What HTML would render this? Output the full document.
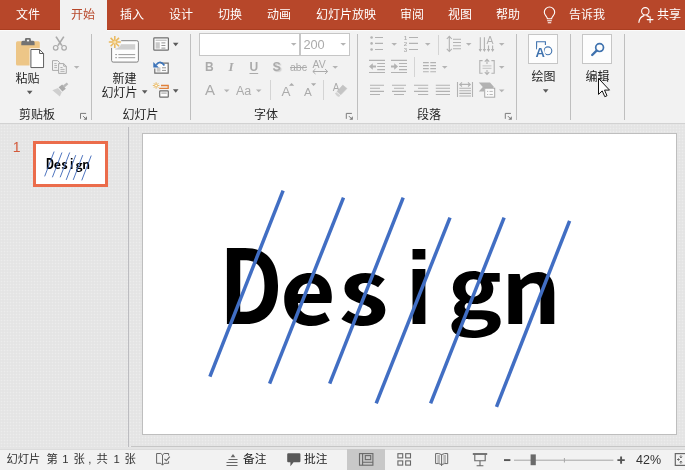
<!DOCTYPE html>
<html lang="zh-CN">
<head>
<meta charset="utf-8">
<title>PowerPoint</title>
<style>
*{margin:0;padding:0;box-sizing:border-box}
html,body{width:685px;height:470px;overflow:hidden;background:#e6e6e6}
body{position:relative;font-family:"Liberation Sans","Noto Sans CJK SC",sans-serif;font-size:12px;color:#262626}
.abs{position:absolute}
#tabs{position:absolute;left:0;top:0;width:685px;height:30px;background:#b7472a;border-bottom:1px solid #aa3e21}
#tabs .t{position:absolute;top:0;height:30px;line-height:30px;color:#fff;font-size:12px;white-space:nowrap}
#tabs .act{position:absolute;left:60px;top:0;width:47px;height:30px;background:#f2f2f2}
#ribbon{position:absolute;left:0;top:30px;width:685px;height:94px;background:#f2f2f2;border-bottom:1px solid #d2d2d2;border-top:1px solid #fbfbfb}
.sep{position:absolute;width:1px;background:#bfbfbf}
.lbl{position:absolute;font-size:12px;line-height:14px;white-space:nowrap;color:#262626}
.g{color:#ababab}
.dd{position:absolute;width:0;height:0;border-left:2.5px solid transparent;border-right:2.5px solid transparent;border-top:3px solid #b0b0b0}
.ddk{border-top-color:#555}
#work{position:absolute;left:0;top:124px;width:685px;height:324px;background-color:#e4e4e4;background-image:radial-gradient(circle at 1.5px 1.5px,#ececec 0.7px,rgba(236,236,236,0) 1.1px);background-size:3px 3px}
#status{position:absolute;left:0;top:449px;width:685px;height:21px;background:#f2f2f2;border-top:1px solid #dcdcdc}
svg{position:absolute;overflow:visible}
</style>
</head>
<body>
<div id="app" style="position:absolute;left:0;top:0;width:685px;height:470px;will-change:transform">
<!-- TAB BAR -->
<div id="tabs">
  <div class="act"></div>
  <span class="t" style="left:16px">文件</span>
  <span class="t" style="left:71px;color:#b7472a">开始</span>
  <span class="t" style="left:120px">插入</span>
  <span class="t" style="left:169px">设计</span>
  <span class="t" style="left:218px">切换</span>
  <span class="t" style="left:267px">动画</span>
  <span class="t" style="left:316px">幻灯片放映</span>
  <span class="t" style="left:400px">审阅</span>
  <span class="t" style="left:448px">视图</span>
  <span class="t" style="left:496px">帮助</span>
  <span class="t" style="left:569px">告诉我</span>
  <span class="t" style="left:657px">共享</span>
</div>
<!-- RIBBON -->
<div id="ribbon"></div>
<div class="abs" style="left:60px;top:30px;width:47px;height:1px;background:#f2f2f2"></div>
<!-- group separators -->
<div class="sep" style="left:91px;top:34px;height:86px"></div>
<div class="sep" style="left:190px;top:34px;height:86px"></div>
<div class="sep" style="left:357px;top:34px;height:86px"></div>
<div class="sep" style="left:516px;top:34px;height:86px"></div>
<div class="sep" style="left:570px;top:34px;height:86px"></div>
<div class="sep" style="left:624px;top:34px;height:86px"></div>
<!-- small separators -->
<div class="sep" style="left:270px;top:80px;height:20px;background:#d4d4d4"></div>
<div class="sep" style="left:323px;top:80px;height:20px;background:#d4d4d4"></div>
<div class="sep" style="left:438px;top:35px;height:20px;background:#d4d4d4"></div>
<div class="sep" style="left:414px;top:57px;height:20px;background:#d4d4d4"></div>

<!-- labels -->
<span class="lbl" style="left:15.6px;top:71.6px">粘贴</span>
<span class="lbl" style="left:19.1px;top:107.6px">剪贴板</span>
<span class="lbl" style="left:112.6px;top:71.6px">新建</span>
<span class="lbl" style="left:101.6px;top:85.6px">幻灯片</span>
<span class="lbl" style="left:122.6px;top:107.6px">幻灯片</span>
<span class="lbl" style="left:254.1px;top:107.6px">字体</span>
<span class="lbl" style="left:417.1px;top:107.6px">段落</span>
<span class="lbl" style="left:531.6px;top:69.6px">绘图</span>
<span class="lbl" style="left:585.6px;top:69.6px">编辑</span>

<!-- font boxes -->
<div class="abs" style="left:199px;top:33px;width:101px;height:23px;background:#fff;border:1px solid #c6c6c6"></div>
<div class="abs" style="left:300px;top:33px;width:50px;height:23px;background:#fff;border:1px solid #c6c6c6"></div>
<span class="lbl g" style="left:303.4px;top:37.2px;font-size:12.8px;line-height:15px">200</span>

<!-- font row 2 -->
<span class="lbl g" style="left:205px;top:60px;font-weight:bold;font-size:12px;line-height:15px">B</span>
<span class="lbl g" style="left:228.5px;top:59px;font-style:italic;font-size:13px;line-height:15px;font-family:'Liberation Serif',serif;font-weight:bold">I</span>
<span class="lbl g" style="left:249.5px;top:60px;font-size:12px;font-weight:bold;line-height:15px;text-decoration:underline;text-underline-offset:1.5px">U</span>
<span class="lbl g" style="left:272.5px;top:59.5px;font-weight:bold;font-size:12.5px;line-height:15px;text-shadow:1.2px 1.2px 1px #cfcfcf">S</span>
<span class="lbl g" style="left:290px;top:60px;font-size:10.5px;line-height:14px;text-decoration:line-through">abc</span>
<span class="lbl g" style="left:312.5px;top:56.7px;font-size:10.5px;line-height:14px;letter-spacing:0.1px">AV</span>
<!-- font row 3 -->
<span class="lbl g" style="left:205px;top:79.5px;font-size:15px;line-height:19px">A</span>
<span class="lbl g" style="left:236px;top:82.5px;font-size:12.5px;line-height:16px">Aa</span>
<span class="lbl g" style="left:281.5px;top:82.5px;font-size:13.5px;line-height:17px">A</span>
<span class="lbl g" style="left:304px;top:83.8px;font-size:11.7px;line-height:15px">A</span>
<span class="lbl g" style="left:332.8px;top:81.8px;font-size:10px;line-height:12px">A</span>

<!-- big buttons -->
<div class="abs" style="left:528px;top:34px;width:30px;height:30px;background:#fdfdfd;border:1px solid #c6c6c6"></div>
<div class="abs" style="left:582px;top:34px;width:30px;height:30px;background:#fdfdfd;border:1px solid #c6c6c6"></div>



<svg id="ico" width="685" height="470" viewBox="0 0 685 470" style="left:0;top:0">
<g id="arrows">
<polygon points="26.9,90.8 32.5,90.8 29.7,94.2" fill="#5a5a5a"/>
<polygon points="141.9,90.3 147.5,90.3 144.7,93.7" fill="#5a5a5a"/>
<polygon points="542.9,89.3 548.5,89.3 545.7,92.7" fill="#5a5a5a"/>
<polygon points="73.9,66 79.4,66 76.65,68.8" fill="#b4b4b4"/>
<polygon points="172.9,42.8 178.5,42.8 175.7,46.2" fill="#5a5a5a"/>
<polygon points="172.9,89.3 178.5,89.3 175.7,92.7" fill="#5a5a5a"/>
<polygon points="290.9,43 296.5,43 293.7,45.8" fill="#b4b4b4"/>
<polygon points="340.4,43 346,43 343.2,45.8" fill="#b4b4b4"/>
<polygon points="332.4,66 338,66 335.2,68.8" fill="#b4b4b4"/>
<polygon points="223.9,89.5 229.5,89.5 226.7,92.3" fill="#b4b4b4"/>
<polygon points="255.9,89.5 261.5,89.5 258.7,92.3" fill="#b4b4b4"/>
<polygon points="391.4,43 397,43 394.2,45.8" fill="#b4b4b4"/>
<polygon points="424.9,43 430.5,43 427.7,45.8" fill="#b4b4b4"/>
<polygon points="465.9,43 471.5,43 468.7,45.8" fill="#b4b4b4"/>
<polygon points="498.9,43 504.5,43 501.7,45.8" fill="#b4b4b4"/>
<polygon points="498.9,66 504.5,66 501.7,68.8" fill="#b4b4b4"/>
<polygon points="498.9,89.5 504.5,89.5 501.7,92.3" fill="#b4b4b4"/>
<polygon points="441.9,66 447.5,66 444.7,68.8" fill="#b4b4b4"/>
</g>
<!-- tab icons -->
<g fill="none" stroke="#fff" stroke-width="1.1" stroke-linecap="round">
<path d="M547.4 18.8 C547.4 16.6 544.3 15.4 544.3 12.2 A5.2 5.2 0 0 1 554.7 12.2 C554.7 15.4 551.6 16.6 551.6 18.8 Z"/>
<path d="M547.6 20.8 H551.4 M548.2 22.7 H550.8"/>
<circle cx="645.3" cy="11.3" r="3.7"/>
<path d="M638.9 22.4 C639.3 18.6 641.4 16.4 644 15.6 M646.8 15.6 C647.8 15.9 648.6 16.4 649.2 17"/>
<path d="M647.2 19.6 H653 M650.1 16.7 V22.5"/>
</g>
<!-- paste -->
<g>
<rect x="16" y="41.2" width="23.8" height="24.4" rx="1.5" fill="#edc687"/>
<path d="M21.3 45.2 V42.4 a1.6 1.6 0 0 1 1.6 -1.6 H24.9 V39.4 a1.4 1.4 0 0 1 1.4 -1.4 H29.5 a1.4 1.4 0 0 1 1.4 1.4 V40.8 H33 a1.6 1.6 0 0 1 1.6 1.6 V45.2 Z" fill="#737373"/>
<rect x="26.9" y="39.7" width="2.2" height="1.7" fill="#f2f2f2"/>
<path d="M30.9 49.5 H39.6 L43.6 53.5 V67.6 H30.9 Z" fill="#fff" stroke="#fbfbfb" stroke-width="2.6"/>
<path d="M30.9 49.5 H39.6 L43.6 53.5 V67.6 H30.9 Z" fill="#fff" stroke="#5a5a5a" stroke-width="1" stroke-linejoin="round"/>
<path d="M39.6 49.5 V53.5 H43.6" fill="none" stroke="#5a5a5a" stroke-width="1"/>
</g>
<!-- scissors -->
<g fill="none" stroke="#ababab">
<path d="M56 36.6 L61.9 45.6" stroke-width="1.7"/>
<path d="M63.8 36.6 L57.9 45.6" stroke-width="1.7"/>
<circle cx="55.7" cy="47.8" r="2.3" stroke-width="1.2"/>
<circle cx="64.1" cy="47.8" r="2.3" stroke-width="1.2"/>
</g>
<!-- copy -->
<g fill="#f2f2f2" stroke="#ababab" stroke-width="1">
<path d="M52.5 60.6 H57.6 L59.6 62.6 V70.4 H52.5 Z"/>
<path d="M58.6 63.6 H63.7 L66.3 66.2 V73.4 H58.6 Z"/>
<path d="M63.7 63.6 V66.2 H66.3" fill="none"/>
<path d="M54.3 63.6 H56.6 M54.3 65.6 H57 M54.3 67.6 H57 M60.4 67.5 H62.6 M60.4 69.4 H64.6 M60.4 71.4 H64.6" stroke-width="0.9"/>
</g>
<!-- format painter -->
<g stroke="none">
<path d="M63 85.6 L66.8 82.6 L68.3 84.3 L64.6 87.4 Z" fill="#b9b9b9"/>
<path d="M58.6 87.2 L62.2 84.6 L65.8 88.8 L62.4 91.6 Z" fill="#ababab"/>
<path d="M52.4 90.2 L58 87.9 L61.8 92.3 L59.8 96.6 Z" fill="#cfcfcf"/>
</g>
<!-- font extras -->
<g fill="none" stroke="#ababab" stroke-width="1">
<path d="M313 71.5 H327.5 M315.5 69 L312.8 71.5 L315.5 74 M325 69 L327.7 71.5 L325 74"/>
</g>
<polygon points="289,85.7 294.2,85.7 291.6,82.9" fill="#ababab"/>
<polygon points="311,83.3 316.2,83.3 313.6,86.1" fill="#ababab"/>
<path d="M342.8 85.1 L346.9 88.5 L340.8 94.8 L337 91.5 Z" fill="#c4c4c4" stroke="#c4c4c4" stroke-width="0.6" stroke-linejoin="round"/>
<path d="M336.3 92.2 L340.3 95.6 L339 96.9 Q336.5 96.3 335 93.5 Z" fill="#d2d2d2"/>
<!-- paragraph -->
<g stroke="#b2b2b2" stroke-width="1.1" fill="none">
<path d="M375 37.5 H383 M375 43.4 H383 M375 49.5 H383"/>
<path d="M409 37.5 H418 M409 43.4 H418 M409 49.5 H418"/>
<!-- dec indent -->
<path d="M369 60.4 H385 M369 72.5 H385 M377.2 63.5 H385 M377.2 66.5 H385 M377.2 69.6 H385"/>
<path d="M391 60.4 H407 M391 72.5 H407 M399 63.5 H407 M399 66.5 H407 M399 69.6 H407"/>
<!-- columns -->
<path d="M423 62.6 H428.8 M423 65.6 H428.8 M423 68.6 H428.8 M423 71.7 H428.8 M430.3 62.6 H436 M430.3 65.6 H436 M430.3 68.6 H436 M430.3 71.7 H436"/>
<!-- line spacing -->
<path d="M453 39.2 H461 M453 42.5 H461 M453 45.7 H461 M453 48.7 H461"/>
<path d="M449.3 36.5 V51.2 M446.8 39 L449.3 36.3 L451.8 39 M446.8 48.8 L449.3 51.5 L451.8 48.8"/>
<!-- text direction -->
<path d="M480.3 37.3 V51 M484.4 37.3 V51 M488.5 45.4 V51 M492.6 45.4 V51"/>
<!-- align rows -->
<path d="M370 85.3 H384 M370 88.3 H380 M370 91.4 H384 M370 94.5 H380"/>
<path d="M392 85.3 H406 M394 88.3 H404 M392 91.4 H406 M394 94.5 H404"/>
<path d="M414 85.3 H428.2 M418 88.3 H428.2 M414 91.4 H428.2 M418 94.5 H428.2"/>
<path d="M435.8 85.3 H450 M435.8 88.3 H450 M435.8 91.4 H450 M435.8 94.5 H450"/>
<!-- distributed -->
<path d="M457.5 82 V97 M472.5 82 V97 M459.3 88.3 H471 M459.3 90.8 H471 M459.3 93.4 H471 M459.3 96 H471"/>
<path d="M460 84.4 H470 M462 82.3 L459.7 84.4 L462 86.5 M468 82.3 L470.3 84.4 L468 86.5"/>
<!-- align text -->
<path d="M482.6 60.6 H479.8 V73.3 H482.6 M491.4 60.6 H494.2 V73.3 H491.4"/>
<path d="M487 59.5 V64 M484.8 61.6 L487 59.3 L489.2 61.6 M487 70 V74.3 M484.8 72.2 L487 74.5 L489.2 72.2"/>
<path d="M482.5 65.9 H491.5 M482.5 68.4 H491.5" stroke="#cdcdcd"/>
</g>
<g fill="#b2b2b2">
<circle cx="371.6" cy="37.5" r="1.3"/><circle cx="371.6" cy="43.4" r="1.3"/><circle cx="371.6" cy="49.5" r="1.3"/>
<!-- indent arrows -->
<path d="M369 66.5 L372.8 63.2 V65.6 H376 V67.4 H372.8 V69.8 Z"/>
<path d="M398 66.5 L394.2 63.2 V65.6 H391 V67.4 H394.2 V69.8 Z"/>
<!-- text dir arrowheads -->
<path d="M478.6 49 H482 L480.3 52 Z M482.7 49 H486.1 L484.4 52 Z M486.8 49 H490.2 L488.5 52 Z M490.9 49 H494.3 L492.6 52 Z"/>
<!-- smartart -->
<path d="M478.8 82.4 H490 L494 87 L493 88 H484 V91.4 H478.8 L482.8 87 Z"/>
</g>
<rect x="484.7" y="88.2" width="10" height="9" fill="#fafafa" stroke="#a8a8a8" stroke-width="1"/>
<path d="M487 91.4 H488.2 M489.5 91.4 H492.8 M487 94.5 H488.2 M489.5 94.5 H492.8" stroke="#b8b8b8" stroke-width="1" fill="none"/>
<g font-family="Liberation Sans, sans-serif" fill="#b2b2b2">
<text x="403.7" y="39.8" font-size="6.2" font-weight="bold">1</text>
<text x="403.7" y="45.8" font-size="6.2" font-weight="bold">2</text>
<text x="403.7" y="51.8" font-size="6.2" font-weight="bold">3</text>
<text x="486.6" y="44" font-size="10.5">A</text>
</g>
<!-- dialog launchers -->
<g>
<path d="M80.5 118.8 V113.4 H86.1" fill="none" stroke="#7c7c7c" stroke-width="1"/><path d="M83.1 116.1 L85.5 118.5" fill="none" stroke="#7c7c7c" stroke-width="1"/><path d="M87.0 116.3 V119.8 H83.5 Z" fill="#7c7c7c"/>
<path d="M346.3 118.8 V113.4 H351.90000000000003" fill="none" stroke="#7c7c7c" stroke-width="1"/><path d="M348.90000000000003 116.1 L351.3 118.5" fill="none" stroke="#7c7c7c" stroke-width="1"/><path d="M352.8 116.3 V119.8 H349.3 Z" fill="#7c7c7c"/>
<path d="M505.3 118.8 V113.4 H510.90000000000003" fill="none" stroke="#7c7c7c" stroke-width="1"/><path d="M507.90000000000003 116.1 L510.3 118.5" fill="none" stroke="#7c7c7c" stroke-width="1"/><path d="M511.8 116.3 V119.8 H508.3 Z" fill="#7c7c7c"/>
</g>
<!-- new slide -->
<g>
<rect x="111.6" y="40.7" width="26.8" height="21.4" rx="1.6" fill="#fdfdfd" stroke="#808080"/>
<rect x="115.2" y="44.2" width="20" height="5.4" fill="#d0d0d0"/>
<path d="M115.2 54.6 H117 M118.4 54.6 H135.2 M115.2 57.7 H117 M118.4 57.7 H135.2" stroke="#8f8f8f" stroke-width="0.9"/>
<circle cx="114.8" cy="42.1" r="6.6" fill="#f2f2f2"/>
<path d="M111.6 47.5 V43 M117 40.7 H120.5" stroke="#f2f2f2" stroke-width="2"/>
<g stroke="#eab95d" stroke-width="1.5" fill="none">
<path d="M114.8 36.1 V48.1 M108.8 42.1 H120.8 M110.6 37.9 L119 46.3 M119 37.9 L110.6 46.3"/>
</g>
<circle cx="114.8" cy="42.1" r="1.6" fill="#f6dfae"/>
</g>
<!-- layout -->
<g>
<rect x="153.8" y="37.8" width="14.6" height="12.4" rx="0.8" fill="#fdfdfd" stroke="#6e6e6e" stroke-width="1.2"/>
<rect x="155.6" y="39.6" width="11" height="1.4" fill="#c9c9c9"/>
<rect x="155.6" y="42.2" width="4.2" height="6.4" fill="#c9c9c9"/>
<path d="M161.4 42.9 H165.4 M161.4 45.5 H165.4 M161.4 48.1 H165.4" stroke="#8a8a8a" stroke-width="0.9"/>
</g>
<!-- reset -->
<g>
<path d="M160.5 63.1 H168.2 V73.1 H154.8 V68.5" fill="#fdfdfd" stroke="#6e6e6e" stroke-width="1.2"/>
<rect x="156.7" y="67.4" width="3.8" height="4.2" fill="#c9c9c9"/>
<path d="M162 67.8 H166 M162 70.4 H166" stroke="#8a8a8a" stroke-width="0.9"/>
<path d="M156.2 64.8 Q160.2 59.6 164.4 65.6" fill="none" stroke="#3b73b9" stroke-width="1.8"/>
<path d="M153.3 62 V67.6 H158.9 Z" fill="#3b73b9"/>
</g>
<!-- section -->
<g>
<path d="M161 85.5 H168.2 V88.3 H159.2" fill="none" stroke="#e0813b" stroke-width="1.3"/>
<rect x="159.7" y="90.9" width="8.6" height="6.3" rx="0.6" fill="#fdfdfd" stroke="#6e6e6e" stroke-width="1.2"/>
<rect x="161.3" y="92.3" width="5.4" height="1.7" fill="#c4c4c4"/>
<g stroke="#e9b559" stroke-width="0.9" fill="none">
<path d="M156.1 82.2 V88.8 M152.8 85.5 H159.4 M153.8 83.2 L158.4 87.8 M158.4 83.2 L153.8 87.8"/>
</g>
<circle cx="156.1" cy="85.5" r="1.3" fill="#fff" stroke="#e9b559" stroke-width="0.7"/>
</g>
<!-- drawing / editing icons -->
<g fill="none" stroke="#3f72ae" stroke-width="1.1">
<path d="M536.6 49.4 V41.8 H545.4 V45"/>
<circle cx="547.9" cy="50.8" r="3.9"/>
</g>
<text x="535.5" y="56.7" style="font-family:'Liberation Sans',sans-serif;font-weight:700;font-size:13px;fill:#3f72ae;stroke:#fdfdfd;stroke-width:3.6px;paint-order:stroke fill;stroke-linejoin:round">A</text>
<circle cx="599.6" cy="47.6" r="3.9" fill="none" stroke="#3f72ae" stroke-width="1.7"/>
<path d="M596.6 50.6 L592.2 55" stroke="#3f72ae" stroke-width="2.4" stroke-linecap="round" fill="none"/>
</svg>
<!-- WORKSPACE -->
<div id="work"></div>
<!-- left panel divider -->
<div class="abs" style="left:128px;top:127px;width:1px;height:320px;background:#bcbcc0"></div>
<div class="abs" style="left:131px;top:446px;width:554px;height:1px;background:#c6c6c6"></div>
<div class="abs" style="left:0;top:447px;width:685px;height:2px;background:#e4e4e4"></div>
<!-- thumbnail -->
<span class="abs" style="left:12.8px;top:138.6px;font-size:14px;line-height:16px;color:#d35a3b">1</span>
<div class="abs" style="left:33px;top:141px;width:75px;height:46px;background:#fff;border:3px solid #eb6c4b"></div>
<svg width="69" height="40" viewBox="143 134 533 300" style="left:36px;top:144px" preserveAspectRatio="none">
<g font-family="Noto Sans CJK SC, Liberation Sans, sans-serif" font-weight="700" font-size="100" fill="#000">
<text transform="matrix(0.8982 0 0 1.0284 218.72 324.00)">D</text>
<text transform="matrix(0.9620 0 0 0.9052 279.95 324.99)">e</text>
<text transform="matrix(1.0093 0 0 0.9069 338.87 325.09)">s</text>
<text transform="matrix(0.936 0 0 1.036 406.05 324.00)" font-family="Liberation Sans, sans-serif">i</text>
<text transform="matrix(0.9148 0 0 0.8111 447.54 318.23)">g</text>
<text transform="matrix(0.9388 0 0 0.9018 500.99 324.00)">n</text>
</g>
<g stroke="#3e68b8" stroke-width="7" fill="none">
<path d="M283.1 190.6 L209.9 376.7"/>
<path d="M343.5 197.7 L269.6 383.7"/>
<path d="M403.2 197.7 L329.7 383.7"/>
<path d="M450 217.6 L376.2 403.4"/>
<path d="M504.1 217.6 L430.6 403.4"/>
<path d="M569.6 220.8 L496.5 406.9"/>
</g>
</svg>
<!-- slide -->
<div class="abs" style="left:142px;top:133px;width:535px;height:302px;background:#fff;border:1px solid #bebebe"></div>
<svg width="685" height="470" viewBox="0 0 685 470" style="left:0;top:0">
<g>
<g font-family="Noto Sans CJK SC, Liberation Sans, sans-serif" font-weight="700" font-size="100" fill="#000">
<text transform="matrix(0.8982 0 0 1.0284 218.72 324.00)">D</text>
<text transform="matrix(0.9620 0 0 0.9052 279.95 324.99)">e</text>
<text transform="matrix(1.0093 0 0 0.9069 338.87 325.09)">s</text>
<text transform="matrix(0.936 0 0 1.036 406.05 324.00)" font-family="Liberation Sans, sans-serif">i</text>
<text transform="matrix(0.9148 0 0 0.8111 447.54 318.23)">g</text>
<text transform="matrix(0.9388 0 0 0.9018 500.99 324.00)">n</text>
</g>
<g stroke="#416ec3" stroke-width="3.5" fill="none">
<g>
<path d="M283.1 190.6 L209.9 376.7"/>
<path d="M343.5 197.7 L269.6 383.7"/>
<path d="M403.2 197.7 L329.7 383.7"/>
<path d="M450 217.6 L376.2 403.4"/>
<path d="M504.1 217.6 L430.6 403.4"/>
<path d="M569.6 220.8 L496.5 406.9"/>
</g>
</g>
</g>
</svg>
<!-- STATUS -->
<div id="status"></div>
<div class="abs" style="left:347px;top:449px;width:38px;height:21px;background:#c8c8c8"></div>
<div class="abs" style="left:0;top:452px;width:140px;height:14px;font-size:11.3px;line-height:14px;color:#333;white-space:nowrap"><span class="abs" style="left:6.4px;top:0">幻灯片</span><span class="abs" style="left:46.6px;top:0">第</span><span class="abs" style="left:62.2px;top:0">1</span><span class="abs" style="left:73.4px;top:0">张</span><span class="abs" style="left:88.3px;top:0">,</span><span class="abs" style="left:96.5px;top:0">共</span><span class="abs" style="left:113.5px;top:0">1</span><span class="abs" style="left:124.6px;top:0">张</span></div>
<span class="lbl" style="left:243px;top:451.5px;font-size:11.7px;line-height:14px;color:#222">备注</span>
<span class="lbl" style="left:304px;top:451.5px;font-size:11.7px;line-height:14px;color:#222">批注</span>
<span class="lbl" style="left:636px;top:453px;font-size:12.5px;line-height:14px;color:#333">42%</span>
<svg width="685" height="470" viewBox="0 0 685 470" style="left:0;top:0">
<!-- spell book -->
<g fill="none" stroke="#666" stroke-width="1">
<path d="M162.5 455 L160.8 453.5 H156.6 V463.3 H160.8 L162.5 465.2 L164.2 463.3 H168.6 V461.2"/>
<path d="M162.5 455 V465 M162.5 455 L164.2 453.5 H168.6 V455.6"/>
<path d="M164.5 458.8 L166.3 460.6 L169.8 456.6" stroke-width="1.2"/>
</g>
<!-- notes -->
<path d="M233 454 L235.3 457.2 H230.7 Z" fill="#666"/>
<path d="M228.5 459.5 H237.5 M226.5 462.5 H237.5 M226.5 465.5 H237.5" stroke="#666" stroke-width="1" fill="none"/>
<!-- comment -->
<path d="M288.2 453.2 H299.4 a1 1 0 0 1 1 1 V461.2 a1 1 0 0 1 -1 1 H293.6 L290.4 466.2 V462.2 H288.2 a1 1 0 0 1 -1 -1 V454.2 a1 1 0 0 1 1 -1 Z" fill="#595959"/>
<!-- normal view -->
<g fill="none" stroke="#686868" stroke-width="1.1">
<rect x="359.5" y="453.6" width="13.4" height="11.6"/>
<path d="M362.6 453.6 V465.2 M362.6 462.3 H372.9"/>
<rect x="365.3" y="455.6" width="5.4" height="4"/>
</g>
<!-- sorter -->
<g fill="none" stroke="#686868" stroke-width="1.1">
<rect x="397.9" y="453.7" width="4.8" height="4.2"/><rect x="405.7" y="453.7" width="4.8" height="4.2"/>
<rect x="397.9" y="460.9" width="4.8" height="4.2"/><rect x="405.7" y="460.9" width="4.8" height="4.2"/>
</g>
<!-- reading -->
<g fill="none" stroke="#686868" stroke-width="1">
<path d="M441.6 454.6 Q438.8 453 435.6 453.6 V463.6 Q438.8 463 441.6 464.6 Q444.6 463 447.7 463.6 V453.6 Q444.6 453 441.6 454.6 V466"/>
<path d="M437.3 456 H440 M437.3 458 H440 M437.3 460 H440 M437.3 462 H440 M443.3 456 H446 M443.3 458 H446 M443.3 460 H446 M443.3 462 H446" stroke-width="0.8"/>
</g>
<!-- slideshow -->
<g fill="none" stroke="#686868" stroke-width="1.1">
<path d="M472.8 454 H487.2" stroke-width="1.8"/>
<path d="M474.8 454.5 V460.8 H485.2 V454.5"/>
<path d="M480 460.8 V465.6 M476.6 465.7 H483.4"/>
</g>
<!-- zoom slider -->
<path d="M504 460.1 H510.4" stroke="#555" stroke-width="1.9"/>
<path d="M514 460.2 H613.4" stroke="#a6a6a6" stroke-width="1"/>
<path d="M564.4 458 V462.5" stroke="#a6a6a6" stroke-width="1"/>
<rect x="530.6" y="454.4" width="5.2" height="10.8" fill="#6a6a6a"/>
<path d="M617.4 460.1 H624.8 M621.1 456.4 V463.8" stroke="#555" stroke-width="1.9"/>
<!-- fit -->
<g fill="none" stroke="#686868" stroke-width="1">
<rect x="675.3" y="453.6" width="12" height="11.8" stroke-width="1.2"/>
<path d="M680.9 455.3 V458 M680.9 461 V463.7 M677 459.5 H679.4"/>
<path d="M679.7 456.6 L680.9 458 L682.1 456.6 M679.7 462.4 L680.9 461 L682.1 462.4 M678.2 458.3 L679.5 459.5 L678.2 460.7" stroke-width="0.9"/>
</g>
</svg>
<svg width="685" height="470" viewBox="0 0 685 470" style="left:0;top:0;pointer-events:none"><!-- cursor -->
<path d="M598.5 78.4 V94.4 L602.2 90.9 L604.8 96.7 L607 95.7 L604.5 90.1 H609.5 Z" fill="#fff" stroke="#111" stroke-width="1" stroke-linejoin="miter"/>
</svg>
</div>
</body>
</html>
